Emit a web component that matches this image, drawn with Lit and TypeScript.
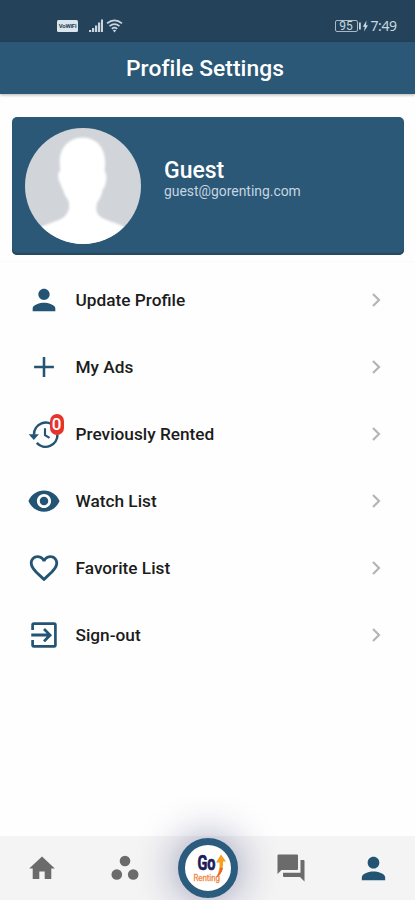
import { LitElement, html, css, svg } from "lit";
import { customElement } from "lit/decorators.js";

const person = svg`<path d="M12 12c2.21 0 4-1.79 4-4s-1.79-4-4-4-4 1.79-4 4 1.79 4 4 4zm0 2c-2.67 0-8 1.34-8 4v2h16v-2c0-2.66-5.33-4-8-4z"/>`;

const items = [
  { label: "Update Profile", icon: person },
  { label: "My Ads", icon: svg`<path d="M19 12.900h-6.100V19h-1.800v-6.100H5v-1.800h6.100V5h1.800v6.100H19z"/>` },
  {
    label: "Previously Rented",
    badge: "0",
    icon: svg`<path d="M4.900 12.500A8.400 8.400 0 0 1 19.600 6.800M21.500 12.400A8.400 8.400 0 0 1 6.900 18.300" fill="none" stroke="currentColor" stroke-width="1.800"/><path d="M1.200 12.200h7.200l-3.600 4z"/><path d="M12.700 8v4.800l3.200 2" fill="none" stroke="currentColor" stroke-width="1.500"/>`,
  },
  {
    label: "Watch List",
    icon: svg`<path d="M12 4.500C7 4.500 2.730 7.610 1 12c1.730 4.390 6 7.500 11 7.500s9.270-3.110 11-7.500c-1.730-4.390-6-7.500-11-7.500zM12 17c-2.760 0-5-2.240-5-5s2.240-5 5-5 5 2.240 5 5-2.240 5-5 5zm0-8c-1.660 0-3 1.340-3 3s1.340 3 3 3 3-1.340 3-3-1.340-3-3-3z"/>`,
  },
  {
    label: "Favorite List",
    icon: svg`<path d="M16.500 3c-1.740 0-3.410.81-4.500 2.090C10.910 3.810 9.240 3 7.500 3 4.420 3 2 5.420 2 8.500c0 3.780 3.400 6.860 8.550 11.540L12 21.350l1.450-1.320C18.600 15.360 22 12.280 22 8.500 22 5.420 19.580 3 16.500 3zm-4.400 15.550l-.1.100-.1-.1C7.140 14.240 4 11.390 4 8.500 4 6.500 5.500 5 7.500 5c1.540 0 3.040.99 3.570 2.360h1.870C13.460 5.990 14.960 5 16.500 5c2 0 3.500 1.500 3.500 3.500 0 2.890-3.140 5.740-7.900 10.050z"/>`,
  },
  {
    label: "Sign-out",
    icon: svg`<path d="M11.300 15.800l1.400 1.300 5-5-5-5-1.400 1.300 2.600 2.600H3v2h10.900zM19.300 3H4.700C3.700 3 3 3.700 3 4.700V8.500h1.900V4.900h14.200v14.200H4.900V15.500H3v3.800c0 1 .7 1.700 1.700 1.700h14.600c1 0 1.700-.7 1.700-1.700V4.700c0-1-.7-1.700-1.700-1.700z"/>`,
  },
];

@customElement("app-root")
export class AppRoot extends LitElement {
  static styles = css`
    :host {
      display: flex;
      flex-direction: column;
      width: 100%;
      height: 900px;
      overflow: hidden;
      background: #fefefe;
      font-family: Roboto, "Liberation Sans", sans-serif;
      color: #1c1c1c;
    }
    svg {
      display: block;
      fill: currentColor;
    }
    .status {
      height: 42px;
      flex: none;
      box-sizing: border-box;
      padding: 10px 18.500px 0 57px;
      background: #24435a;
      color: #c9d6df;
      display: flex;
      justify-content: space-between;
      align-items: center;
    }
    .group {
      display: flex;
      align-items: center;
    }
    .vowifi {
      width: 21px;
      height: 12px;
      border-radius: 1.500px;
      background: #dbe5ec;
      color: #24435a;
      font-size: 6px;
      font-weight: 700;
      line-height: 12px;
      text-align: center;
      letter-spacing: -0.2px;
      margin-right: 11px;
    }
    .wifi {
      margin-left: 3px;
    }
    .battery {
      box-sizing: border-box;
      width: 23px;
      height: 12px;
      border: 1px solid #a9bac6;
      border-radius: 2px;
      font-size: 12px;
      line-height: 11px;
      text-align: center;
    }
    .bolt {
      margin-left: 1px;
    }
    .time {
      font-family: "Noto Sans", sans-serif;
      font-size: 14px;
      line-height: 14px;
      letter-spacing: -0.45px;
      margin-left: 2px;
    }
    .header {
      height: 51.500px;
      flex: none;
      background: #2b5876;
      color: #fff;
      text-align: center;
      font-size: 22.800px;
      font-weight: 500;
      line-height: 54px;
      padding-right: 5px;
      letter-spacing: 0.05px;
      box-shadow: 0 1px 3px rgba(0, 0, 0, 0.3);
    }
    .profile {
      flex: none;
      box-sizing: border-box;
      height: 138px;
      margin: 23.500px 11.500px 0 12px;
      padding-left: 13px;
      border-radius: 5px;
      background: #2b5876;
      box-shadow: inset 0 -2px 1px #27495f;
      display: flex;
      align-items: center;
      gap: 23px;
      color: #fff;
    }
    .name {
      font-size: 23px;
      font-weight: 500;
      line-height: 24px;
      margin-top: -14px;
    }
    .mail {
      font-size: 13.900px;
      line-height: 16px;
      color: #c5d5e2;
    }
    .menu {
      margin-top: 6px;
      padding-top: 4.500px;
      border-top: 1px solid #fafafa;
      flex: 1;
    }
    .row {
      height: 67px;
      display: flex;
      align-items: center;
      padding: 0 29px 0 26.500px;
    }
    .icon {
      position: relative;
      width: 34px;
      margin-right: 15px;
      color: #235473;
    }
    .badge {
      position: absolute;
      left: 23px;
      top: -3.500px;
      width: 14px;
      height: 21px;
      border-radius: 7px;
      background: #e6332c;
      color: #fff;
      font-size: 17px;
      font-weight: 500;
      line-height: 21px;
      text-align: center;
    }
    .label {
      flex: 1;
      font-size: 17.250px;
      font-weight: 500;
      line-height: 22px;
    }
    .tabs {
      height: 64px;
      flex: none;
      background: #f4f4f4;
      display: grid;
      grid-template-columns: repeat(5, 1fr);
      align-items: center;
      justify-items: center;
      color: #6b6b6b;
    }
    .current {
      color: #235473;
    }
    .go {
      box-sizing: border-box;
      width: 60px;
      height: 60px;
      border-radius: 50%;
      border: 7px solid #2b5c7d;
      background: #fff;
      box-shadow: 0 0 38px 4px rgba(40, 40, 110, 0.38);
      margin-top: -1px;
    }
    .logo {
      font-size: 19.500px;
      font-weight: 700;
    }
    .tagline {
      font-size: 8.500px;
      font-weight: 400;
    }
  `;

  render() {
    return html`
      <div class="status">
        <div class="group">
          <div class="vowifi">VoWiFi</div>
          <svg width="14" height="14" viewBox="0 0 14 14">
            <path d="M0 11h2.200v2H0zM3 9h2.200v4H3zM6 6.500h2.200V13H6zM9 3.500h2.200V13H9zM12 0.500h2V13h-2z" />
          </svg>
          <svg class="wifi" width="17" height="14" viewBox="0 0 17 14">
            <g fill="none" stroke="currentColor" stroke-width="1.700">
              <path d="M1 4.400Q8.500-1.800 16 4.400M3.500 7.200Q8.500 3 13.500 7.200M5.800 9.800Q8.500 7.600 11.200 9.800" />
            </g>
            <path d="M6.800 11.300Q8.500 10 10.200 11.300L8.500 13.500z" />
          </svg>
        </div>
        <div class="group">
          <div class="battery">95</div>
          <svg class="bolt" width="10" height="12" viewBox="0 0 10 12">
            <path d="M0 2.500H1.800v7H0zM7.500.5L3.800 6.700h2L5 11.500 9 5.200H7z" />
          </svg>
          <div class="time">7:49</div>
        </div>
      </div>
      <div class="header">Profile Settings</div>
      <div class="profile">
        <svg width="116" height="116" viewBox="0 0 115 115">
          <defs>
            <clipPath id="face"><circle cx="57.500" cy="57.500" r="57.500" /></clipPath>
            <filter id="soft"><feGaussianBlur stdDeviation="1" /></filter>
          </defs>
          <g clip-path="url(#face)">
            <rect width="115" height="115" fill="#d1d5da" />
            <path
              filter="url(#soft)"
              fill="#fff"
              d="M57 9.500C43 10 34 20 34.500 35L35 43C32 43 32.500 51 35 55C36 58 37 60 38 62C39 67 42 70 43.500 73C45 82 41 88 34 91L16 98L4 120H112L101 100C94 95 85 93 78 90C71 87 69 81 72 73C75 70 76 65 77 61C79 60 82 50 80 45L79 43L79.500 34C79 19 71 10 57 9.500Z"
            />
          </g>
        </svg>
        <div>
          <div class="name">Guest</div>
          <div class="mail">guest@gorenting.com</div>
        </div>
      </div>
      <div class="menu">
        ${items.map(
          (item) => html`
            <div class="row">
              <div class="icon">
                <svg width="34" height="34" viewBox="0 0 24 24">${item.icon}</svg>
                ${item.badge ? html`<span class="badge">${item.badge}</span>` : null}
              </div>
              <div class="label">${item.label}</div>
              <svg width="20" height="20" viewBox="0 0 20 20">
                <path d="M7 4l6 6-6 6" fill="none" stroke="#b5b5b5" stroke-width="2.200" />
              </svg>
            </div>
          `
        )}
      </div>
      <div class="tabs">
        <svg width="26" height="24" viewBox="0 0 26 24">
          <path d="M13 .5L.2 12.500H3.700V23H10.300V15.500h5.400V23h6.600V12.500h3.500z" />
        </svg>
        <svg width="28" height="26" viewBox="0 0 28 26">
          <circle cx="14" cy="6" r="5.300" />
          <circle cx="5.800" cy="19.500" r="5.300" />
          <circle cx="22.200" cy="19.500" r="5.300" />
        </svg>
        <div class="go">
          <svg width="46" height="46" viewBox="0 0 46 46">
            <text class="logo" x="12.500" y="24.500" textLength="18" lengthAdjust="spacingAndGlyphs" fill="#1b1c5c" stroke="#1b1c5c" stroke-width=".7">Go</text>
            <text class="tagline" x="8.500" y="35.500" textLength="26.500" lengthAdjust="spacingAndGlyphs" fill="#f08a4b" stroke="#f08a4b" stroke-width=".3">Renting</text>
            <path d="M31 32.500C34 28 35 22 34.500 17.500h-3.500l5-8 5 7h-3C38.500 24 36 30 31 32.500z" fill="#f6a01f" />
            <path d="M31 32.500C34 28.500 35 25 35 22.500l3 .5C37 27 35 31 31 32.500z" fill="#e9652a" />
          </svg>
        </div>
        <svg width="28" height="28" viewBox="0 0 28 28">
          <path d="M1.500.5h18.500q1 0 1 1V15q0 1-1 1H4.500L.5 20V1.500q0-1 1-1zM23.500 6h3q1 0 1 1V27.500L23 23H7q-1 0-1-1V18.800H23.500z" />
        </svg>
        <svg class="current" width="35" height="35" viewBox="0 0 24 24">${person}</svg>
      </div>
    `;
  }
}
